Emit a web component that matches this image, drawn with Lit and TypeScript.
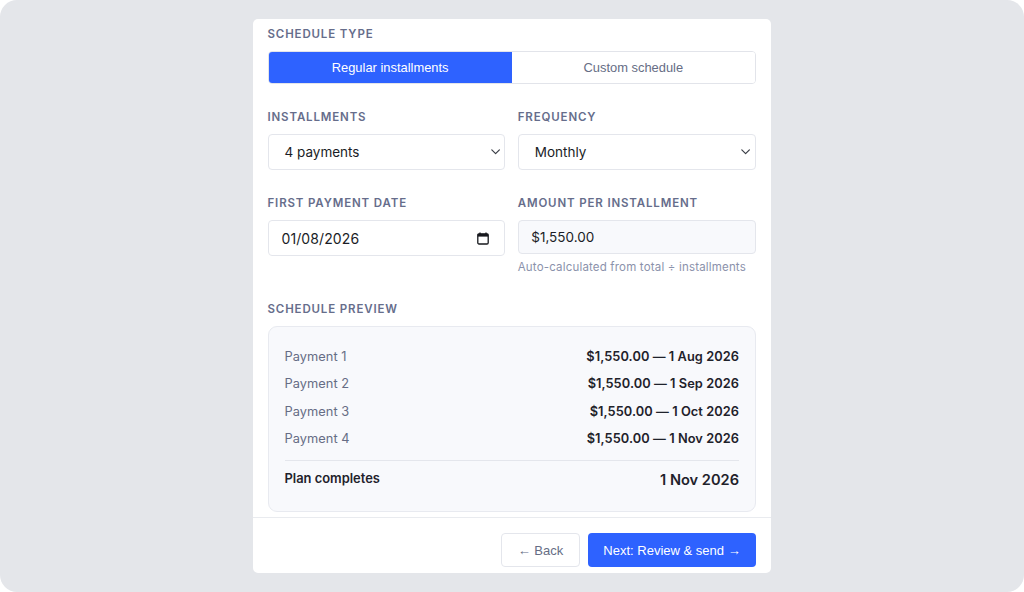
import { LitElement, html, css, svg } from "lit";
import { customElement } from "lit/decorators.js";

const chevron = svg`<path d="M0.8 0.8 L4.6 4.6 L8.4 0.8" fill="none" stroke="#3a3e46" stroke-width="1.2" stroke-linecap="round" stroke-linejoin="round"/>`;

@customElement("app-root")
export class AppRoot extends LitElement {
  static styles = css`
    :host { display: block; width: 1024px; height: 592px; background: #fff; font-family: Inter, "Liberation Sans", sans-serif; color: #1a1d26; }
    * { box-sizing: border-box; }
    .page { width: 1024px; height: 592px; background: #e4e6ea; border-radius: 17px; padding: 19px 252.5px; }
    .card { width: 518.5px; height: 554px; background: #fff; border-radius: 5px; display: flex; flex-direction: column; overflow: hidden; }
    .body { flex: 1; min-height: 0; padding: 8px 15px 0; }
    .label { font-size: 11.5px; line-height: 14px; font-weight: 600; letter-spacing: 0.85px; color: #666d8b; text-transform: uppercase; }
    .title { margin-top: 0; }
    .seg { margin-top: 10px; height: 33px; display: flex; border: 1px solid #e2e4ea; border-radius: 4px; overflow: hidden; font-family: "Liberation Sans", Arial, sans-serif; font-size: 12.9px; }
    .seg div { flex: 1; display: flex; align-items: center; justify-content: center; }
    .seg .on { background: #2e62ff; color: #fff; }
    .seg .off { background: #fff; color: #666d85; }
    .grid { display: grid; grid-template-columns: 237.75px 237.75px; column-gap: 12.5px; }
    .r1 { margin-top: 26px; }
    .r2 { margin-top: 26px; }
    .field { margin-top: 10px; height: 36px; border: 1px solid #e4e6ec; border-radius: 4px; display: flex; align-items: center; justify-content: space-between; font-size: 13.5px; padding: 0 3.5px 0 16px; background: #fff; }
    .date { font-size: 14px; padding: 0 15.5px 0 13px; letter-spacing: 0.1px; }
    .ro { background: #f8f9fc; height: 34px; padding-left: 12.5px; }
    .hint { margin-top: 6px; font-size: 11.5px; line-height: 15px; color: #8b92ab; letter-spacing: 0.18px; }
    .sec { margin-top: 27px; }
    .preview { margin-top: 10px; height: 186px; background: #f8f9fc; border: 1px solid #e8eaf0; border-radius: 9px; padding: 16px 16px 0; }
    .row { height: 27.3px; display: flex; align-items: center; justify-content: space-between; font-size: 12.8px; color: #666d85; letter-spacing: 0.06px; }
    .row b { font-weight: 600; color: #1f222b; }
    .done { margin-top: 8px; border-top: 1px solid #e4e6ec; padding-top: 10px; display: flex; justify-content: space-between; align-items: flex-start; font-weight: 600; font-size: 12.9px; color: #1f222b; line-height: 16px; }
    .done .big { font-size: 14.6px; line-height: 18px; }
    .foot { flex: none; height: 56px; border-top: 1px solid #e9ebef; padding: 15px 15px 0; display: flex; justify-content: flex-end; gap: 8px; font-family: "Liberation Sans", Arial, sans-serif; font-size: 13px; }
    .btn { height: 34px; border-radius: 4px; display: flex; align-items: center; justify-content: center; }
    .back { width: 79px; border: 1px solid #e4e6ec; color: #666d85; background: #fff; }
    .next { width: 168px; background: #2e62ff; color: #fff; }
  `;

  render() {
    const rows = [
      ["Payment 1", "$1,550.00 — 1 Aug 2026"],
      ["Payment 2", "$1,550.00 — 1 Sep 2026"],
      ["Payment 3", "$1,550.00 — 1 Oct 2026"],
      ["Payment 4", "$1,550.00 — 1 Nov 2026"],
    ];
    return html`
      <div class="page">
        <div class="card">
          <div class="body">
            <div class="label title">Schedule type</div>
            <div class="seg"><div class="on">Regular installments</div><div class="off">Custom schedule</div></div>
            <div class="grid r1">
              <div><div class="label">Installments</div>
                <div class="field"><span>4 payments</span><svg width="10" height="6" viewBox="0 0 10 6">${chevron}</svg></div></div>
              <div><div class="label">Frequency</div>
                <div class="field"><span>Monthly</span><svg width="10" height="6" viewBox="0 0 10 6">${chevron}</svg></div></div>
            </div>
            <div class="grid r2">
              <div><div class="label">First payment date</div>
                <div class="field date"><span>01/08/2026</span>
                  <svg width="12" height="13" viewBox="0 0 12 13"><path d="M3 0.4V2.4M9 0.4V2.4" stroke="#16181d" stroke-width="1.3" fill="none"/><rect x="0.8" y="1.8" width="10.4" height="10.2" rx="1.2" fill="none" stroke="#16181d" stroke-width="1.3"/><rect x="0.8" y="1.8" width="10.4" height="2.8" fill="#16181d"/></svg>
                </div></div>
              <div><div class="label">Amount per installment</div>
                <div class="field ro"><span>$1,550.00</span></div>
                <div class="hint">Auto-calculated from total ÷ installments</div></div>
            </div>
            <div class="label sec">Schedule preview</div>
            <div class="preview">
              ${rows.map((r) => html`<div class="row"><span>${r[0]}</span><b>${r[1]}</b></div>`)}
              <div class="done"><span>Plan completes</span><span class="big">1 Nov 2026</span></div>
            </div>
          </div>
          <div class="foot">
            <div class="btn back">← Back</div>
            <div class="btn next">Next: Review &amp; send →</div>
          </div>
        </div>
      </div>
    `;
  }
}
